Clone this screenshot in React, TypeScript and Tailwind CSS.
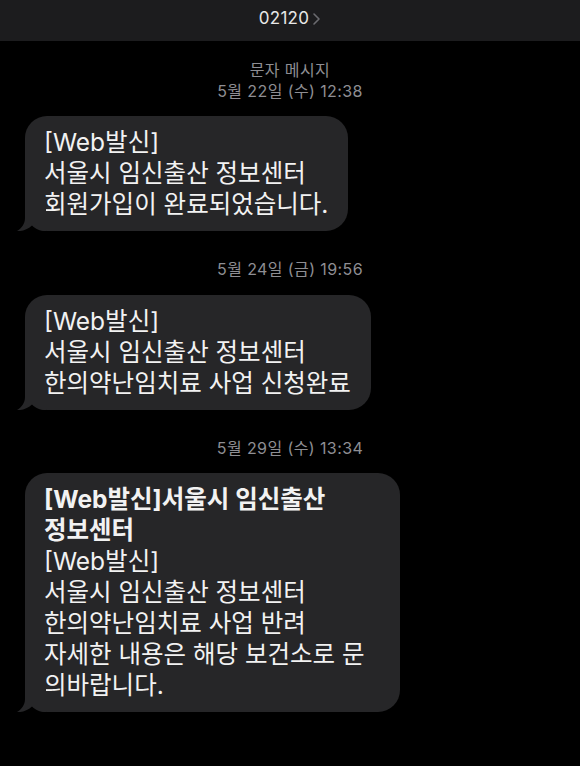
import React from "react";

const FONT = 'font-["Inter","Noto_Sans_CJK_KR",sans-serif]';

function Tail() {
  return (
    <svg
      className="absolute left-[-9px] bottom-0"
      width="30"
      height="26"
      viewBox="0 0 30 26"
      aria-hidden="true"
    >
      <path
        d="M9 0 L9 13 C9 19 5.5 23.5 1 26 C6 26.5 11.5 24.5 16 20.5 C19.5 24 23.5 26 30 26 L30 0 Z"
        fill="#262628"
      />
    </svg>
  );
}

function Bubble({
  width,
  lines,
}: {
  width: string;
  lines: { text: string; bold?: boolean }[];
}) {
  return (
    <div className={`relative ml-[25px] ${width}`}>
      <div className="relative z-10 rounded-[22px] bg-[#262628] pl-[19px] pr-[10px] pt-[11px] pb-[11px]">
        {lines.map((l, i) => (
          <div
            key={i}
            className={`whitespace-nowrap text-[24.5px] leading-[31px] text-[#f2f2f2] ${
              l.bold ? "font-bold" : "font-normal"
            }`}
          >
            {l.text}
          </div>
        ))}
      </div>
      <div className="absolute inset-0 z-20 pointer-events-none">
        <Tail />
      </div>
    </div>
  );
}

function Stamp({ children }: { children: React.ReactNode }) {
  return (
    <div className="text-center text-[16px] leading-[21px] tracking-[0.4px] text-[#8e8e93]">
      {children}
    </div>
  );
}

export default function App() {
  return (
    <div className={`w-[580px] h-[766px] bg-black overflow-hidden ${FONT}`}>
      <div className="h-[41px] bg-[#1c1c1e] flex items-center justify-center pb-[4px]">
        <span className="text-[17px] text-[#e8e8e8] tracking-[0.3px]">02120</span>
        <svg width="9" height="14" viewBox="0 0 9 14" className="ml-[3px] mt-[1px]" aria-hidden="true">
          <path d="M2 2 L7 7 L2 12" stroke="#6b6b70" strokeWidth="1.6" fill="none" strokeLinecap="round" strokeLinejoin="round" />
        </svg>
      </div>

      <div className="pt-[19px]">
        <Stamp>문자 메시지</Stamp>
        <Stamp>5월 22일 (수) 12:38</Stamp>
      </div>
      <div className="mt-[14px]">
        <Bubble
          width="w-[323px]"
          lines={[
            { text: "[Web발신]" },
            { text: "서울시 임신출산 정보센터" },
            { text: "회원가입이 완료되었습니다." },
          ]}
        />
      </div>

      <div className="mt-[28px]">
        <Stamp>5월 24일 (금) 19:56</Stamp>
      </div>
      <div className="mt-[15px]">
        <Bubble
          width="w-[346px]"
          lines={[
            { text: "[Web발신]" },
            { text: "서울시 임신출산 정보센터" },
            { text: "한의약난임치료 사업 신청완료" },
          ]}
        />
      </div>

      <div className="mt-[28px]">
        <Stamp>5월 29일 (수) 13:34</Stamp>
      </div>
      <div className="mt-[14px]">
        <Bubble
          width="w-[375px]"
          lines={[
            { text: "[Web발신]서울시 임신출산", bold: true },
            { text: "정보센터", bold: true },
            { text: "[Web발신]" },
            { text: "서울시 임신출산 정보센터" },
            { text: "한의약난임치료 사업 반려" },
            { text: "자세한 내용은 해당 보건소로 문" },
            { text: "의바랍니다." },
          ]}
        />
      </div>
    </div>
  );
}
